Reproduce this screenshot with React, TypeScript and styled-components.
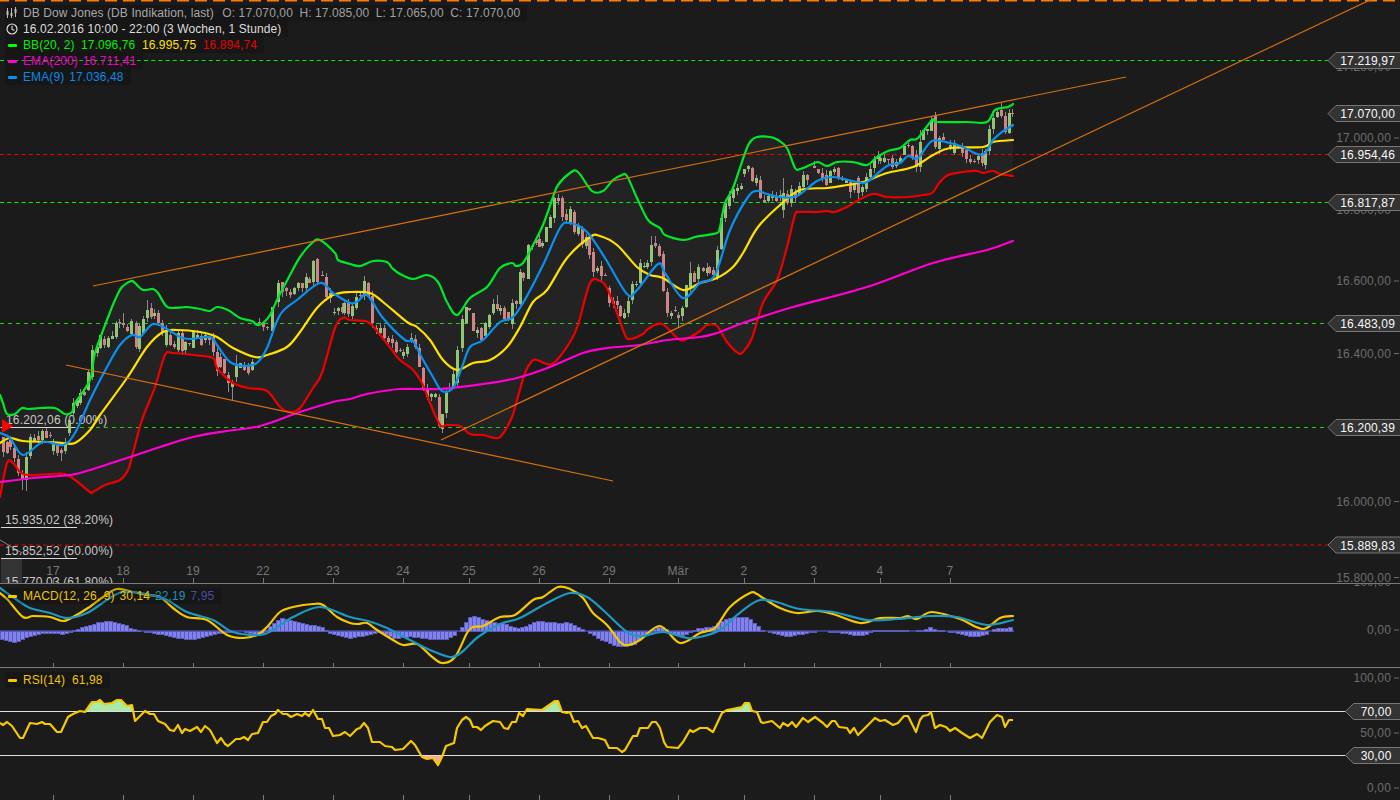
import React from "react";
import styled, { createGlobalStyle } from "styled-components";

type Pt = [number, number];
const P = (s: string): Pt[] => s.trim().split(/\s+/).map((t) => { const [a, b] = t.split(","); return [+a, +b] as Pt; });

const bbUp = P(`0,395 3,403 7,414 15,414 22,408 28,409 40,408 55,408 65,414 72,412 75,403 90,380 95,353 107,320 115,300 122,287 131,281 135,283 143,290 153,289 158,293 166,306 173,308 187,307 200,309 210,311 217,307 228,310 240,318 252,321 257,325 263,323 270,315 278,298 290,275 300,257 312,243 320,240 335,253 338,260 350,264 360,266 373,261 387,262 392,268 400,274 413,279 427,275 438,282 447,302 457,315 470,298 487,287 500,268 512,263 516,266 523,263 532,247 543,225 553,197 558,185 570,173 578,172 592,191 603,191 613,180 622,175 627,176 637,198 648,220 660,228 665,235 683,240 695,237 700,236 717,233 720,227 725,203 733,188 745,153 750,142 757,137 770,137 778,140 787,148 795,168 800,169 810,165 818,162 827,166 837,162 853,162 867,165 877,157 888,151 900,148 910,140 918,138 932,120 937,122 967,122 987,122 995,110 1008,107 1013,104`);
const bbLo = P(`0,497 7,463 13,463 20,472 28,475 50,474 65,474 75,480 90,492 93,492 105,485 120,480 128,470 133,453 142,420 155,387 165,355 173,353 193,355 213,358 217,368 233,383 248,388 267,391 280,407 290,412 300,408 313,388 322,373 335,328 343,318 350,320 368,322 380,335 392,350 400,360 413,370 422,383 430,403 440,425 447,425 460,426 470,434 483,435 495,438 502,435 512,417 517,400 525,373 532,361 537,360 547,364 555,362 570,342 578,325 590,283 600,281 607,288 617,313 625,335 630,339 643,334 648,329 662,324 680,340 690,337 700,331 707,325 717,326 727,342 738,353 743,352 752,338 763,303 777,280 787,247 795,215 800,212 817,212 827,211 835,212 847,207 857,201 873,194 887,197 908,197 923,195 932,193 940,182 948,175 963,172 977,171 983,173 993,171 1000,174 1013,176`);
const bbMid = P(`0,443 10,438 23,441 50,442 63,443 75,443 90,430 100,415 127,378 147,347 163,332 177,330 200,332 217,337 233,348 255,357 267,355 287,347 300,332 317,308 333,295 350,292 370,293 383,302 407,322 417,327 430,340 443,360 457,370 473,363 490,360 507,347 520,327 533,302 547,290 567,258 590,237 600,236 617,245 637,267 650,275 663,278 683,290 700,283 717,278 733,267 743,253 758,227 780,205 800,190 827,188 847,185 863,182 887,173 913,167 933,155 950,148 983,147 993,142 1013,140`);
const ema9 = P(`0,433 10,438 23,455 43,442 63,445 75,433 90,400 107,367 120,345 132,335 140,337 153,324 167,329 180,337 190,339 210,337 217,345 230,362 247,366 258,362 267,348 280,315 297,300 320,283 333,293 350,303 358,301 367,295 383,318 405,340 413,341 422,358 433,377 442,391 453,388 462,367 470,347 483,340 500,322 512,318 523,303 543,265 560,228 570,223 587,232 605,258 627,294 637,290 658,264 665,273 683,298 700,283 715,275 730,230 748,197 757,191 767,194 780,197 797,196 817,181 833,177 857,182 867,182 887,166 900,163 908,156 918,158 932,141 950,143 963,147 977,154 985,153 993,140 1002,132 1013,125`);
const ema200 = P(`0,482 33,478 70,475 90,470 130,457 160,447 193,437 227,431 260,426 300,412 333,402 350,399 367,394 400,389 440,389 483,384 517,378 550,367 583,353 607,348 640,345 667,340 700,337 717,333 743,323 793,307 867,287 933,263 987,250 1013,241`);

const macdA = P(`0,593 8,600 23,617 33,616 50,617 63,621 73,617 88,608 103,597 117,589 133,592 147,595 160,597 173,608 187,617 207,620 227,635 243,638 257,635 267,627 280,612 293,607 313,604 323,605 337,617 350,623 358,624 367,623 377,630 393,640 403,645 417,644 430,655 442,663 455,657 467,633 473,627 483,626 500,617 515,615 533,600 543,597 558,587 570,589 583,598 593,613 607,625 620,642 628,645 640,640 660,626 680,643 700,633 715,628 730,607 750,593 757,594 763,598 780,608 797,613 817,611 833,614 860,623 880,618 900,618 908,616 917,619 932,612 960,619 983,629 1000,618 1013,616`);
const macdB = P(`0,588 17,600 30,608 50,613 67,618 87,613 107,600 123,592 147,594 167,600 187,612 213,620 233,632 260,635 273,630 293,617 320,607 350,617 368,621 387,628 410,640 430,650 450,657 462,652 478,637 500,624 520,618 547,603 570,593 587,597 603,610 627,632 642,636 663,632 687,638 700,637 720,630 737,615 757,601 773,601 800,609 833,612 867,620 897,619 930,616 957,617 987,625 1013,620`);
const histAnchors = P(`0,7 8,10 16,11 24,7 32,4 44,2 56,2 64,3 72,0 80,-3 90,-6 98,-9 106,-10 116,-9 124,-7 130,-3 140,0 150,1 160,3 170,5 180,7 192,8 204,6 215,3 225,1 240,0 250,2 258,4 264,1 272,-7 282,-13 292,-11 302,-8 312,-6 322,-4 328,1 338,4 350,7 365,4 380,1 395,7 410,5 430,8 445,8 455,3 458,0 462,-4 470,-14 477,-15 485,-11 495,-9 505,-7 515,-4 520,-3 530,-7 535,-10 550,-9 560,-8 565,-9 570,-8 578,-4 585,-1 590,2 600,8 610,12 618,15 625,15 635,13 640,7 648,3 655,-3 660,-5 665,-3 670,2 680,5 690,1 697,-3 712,-4 718,-8 725,-12 735,-14 748,-14 752,-10 757,-6 762,-1 770,1 780,4 790,5 800,3 810,1 825,0 845,2 855,4 862,4 870,1 875,-1 885,-1 905,-1 915,0 925,-2 930,-4 935,-2 945,0 955,1 965,4 975,5 985,4 990,0 995,-3 1005,-3 1013,-4`);

const rsi = P(`0,723 3,725 7,722 12,726 20,738 23,738 30,723 37,724 42,722 45,724 50,724 57,732 61,732 68,717 73,714 80,711 85,712 92,702 97,702 100,700 104,704 112,703 117,700 121,700 127,706 132,705 135,721 145,711 150,714 154,714 158,721 165,724 170,730 174,731 178,725 182,733 185,729 190,731 197,727 201,732 205,726 210,730 217,743 221,738 225,744 228,746 236,739 240,739 244,737 248,740 252,734 258,733 263,722 267,722 271,716 275,714 278,710 283,714 287,714 291,717 297,714 302,716 305,713 309,716 313,710 318,719 322,719 325,728 329,728 333,736 340,735 345,732 350,736 357,729 360,728 364,723 368,728 372,742 380,742 385,746 392,747 395,750 403,749 411,741 415,745 422,757 427,759 433,758 438,765 442,757 446,746 454,743 457,728 462,720 466,717 470,720 473,727 477,727 481,730 485,726 493,721 500,722 504,728 508,729 512,722 516,722 519,713 523,716 527,709 542,710 555,701 558,701 562,712 567,713 570,712 574,722 578,721 582,728 586,726 593,738 598,738 605,740 609,748 617,748 622,752 625,750 633,736 637,736 640,728 648,728 652,722 656,722 660,728 664,742 667,747 678,748 683,742 690,730 693,732 700,728 707,728 713,732 722,713 727,710 742,707 745,703 749,703 752,711 757,712 761,722 763,723 772,721 780,728 783,723 788,726 792,722 796,727 803,718 808,722 815,717 823,723 827,727 832,721 835,721 839,727 847,728 850,733 854,728 858,735 863,730 875,718 880,721 885,720 893,725 898,723 904,716 908,716 916,732 920,720 923,716 928,715 931,712 935,728 940,725 946,727 950,731 955,728 962,733 970,738 977,734 982,738 990,722 997,715 1002,717 1005,727 1009,720 1013,720`);

// x:top:bottom:u|d  (optional :high:low for long wicks)
const candleSrc = `3:437:452:d 7:442:453:d 10:440:447:d 14:448:458:d 18:459:473:d 22:473:479:d:470:490 26:457:480:u:452:491 30:437:456:u 34:438:441:u 38:436:440:d:431:443 42:431:440:u 46:431:438:d 50:435:436:d 53:444:451:u 57:445:453:d 61:450:453:d:448:461 65:443:451:u 69:420:433:u 73:403:413:u 77:400:406:u 80:393:403:u 84:392:395:d 88:372:390:u 92:350:377:u 97:347:353:u 100:335:348:u 104:339:345:d 108:338:347:u 112:336:339:u 116:323:337:u 119:322:323:d 123:323:325:d:313:328 127:327:331:d 131:321:334:u 136:323:347:d 139:326:349:u 143:319:333:u 147:310:318:u:300:322 151:308:317:d 154:313:316:u 158:313:323:d 162:323:333:d 166:330:345:u 170:335:345:d 174:344:347:d 178:333:350:u 182:333:351:d 185:342:350:u 189:343:344:d 193:331:348:u 197:335:338:u 201:336:345:d 205:335:340:u 209:337:340:d 213:337:352:d 217:352:371:d 220:357:367:d 224:359:373:d 228:375:383:d:372:392 232:383:387:u:380:400 236:366:377:u:355:382 240:363:368:u 244:365:370:d 248:367:373:d 252:362:370:u 259:322:323:d 263:323:327:d 267:327:328:d 272:307:331:u 278:283:302:u 282:282:292:d 286:288:291:d 290:292:295:d 294:288:294:u 298:283:288:u 302:283:288:d 306:277:288:u 309:279:283:d 313:261:282:u 317:259:282:d 322:275:276:d 326:277:297:d 330:293:298:u 334:312:313:u 338:308:311:u 342:307:312:d 344:303:313:u 348:303:314:d 352:306:316:u 356:297:308:u 360:295:296:d 364:281:296:u:276:300 368:283:296:d 372:296:323:d 376:328:330:d 380:328:333:u 384:328:338:d 388:338:342:d 392:339:343:d 396:342:352:d 400:350:351:d 403:352:356:u 407:347:354:u 411:338:340:u:333:343 415:339:347:d 419:348:367:d 423:368:388:d 427:389:397:d:384:400 431:394:397:u 435:394:397:u 439:397:426:d 442:414:429:u 446:392:413:u 449:388:389:d 453:374:387:u 457:350:383:u 462:319:348:u 466:307:323:u 469:308:310:d 473:313:331:d 477:330:333:u 481:328:340:d 485:323:336:u 489:315:327:u 493:304:313:u 497:304:309:d:295:311 500:308:311:u 504:308:319:d 508:312:320:d 512:303:324:u 516:301:304:d 520:272:304:u 523:273:278:d 528:245:279:u 532:246:247:d 536:240:243:d 539:239:247:d 542:243:246:u 546:227:242:u 550:217:228:u 554:198:218:u 558:198:201:d 562:198:217:d 566:214:220:d 570:209:222:u 574:212:232:d 578:225:234:u 582:229:244:d 586:237:246:u 589:238:255:d 593:252:272:d 597:268:271:u 601:266:276:d 605:275:276:d 609:288:303:d 613:301:304:d 617:301:305:d 620:306:316:d 624:313:318:u 628:301:313:u 632:284:300:u 636:284:285:u 640:263:283:u 644:266:267:u 647:263:267:u 651:245:262:u:236:266 655:243:246:d:236:248 659:246:256:d 663:254:291:d 667:292:313:d 671:313:316:u 675:310:311:d 678:315:318:d:312:328 682:308:316:u 686:285:307:u 690:273:287:u:262:292 694:273:282:d 698:267:279:u 703:268:271:d 707:268:273:u 709:267:273:d 713:270:275:d 717:250:277:u 721:218:249:u 725:203:218:u 729:196:206:u 733:189:198:u 737:188:191:u 741:186:189:u 744:169:174:u 748:166:169:u 752:168:181:d 756:178:183:u 760:180:198:d 764:200:202:d 768:196:201:u 772:195:198:u 776:196:201:d 780:195:198:u 783:193:210:u:178:218 787:194:203:d 791:189:203:u 795:193:198:d 799:186:195:u 803:175:187:u 807:175:180:d 814:166:168:d 818:169:173:d 822:173:178:d 826:175:185:d 830:171:183:u 834:169:172:u 838:168:178:d 842:178:180:d 846:180:183:u 850:182:192:d:180:198 854:183:190:u 858:178:193:d:176:200 862:187:192:u 866:177:189:u 870:169:177:u 874:159:168:u 878:155:159:u 880:158:161:u 884:158:162:u 888:159:160:d 892:158:167:d 896:162:166:u 900:158:162:u 904:146:155:u 908:145:146:d 912:146:157:d 916:155:167:d:150:172 920:142:167:u:130:172 923:130:140:u 927:129:131:u 931:120:131:u 935:116:147:d 939:138:149:u 943:137:140:d 950:145:149:u 954:143:153:u 958:145:148:d 962:147:153:d 966:150:159:d 970:159:162:d 974:161:162:d 978:156:160:u 982:153:163:d 985:151:165:u 989:129:151:u 993:118:129:u 997:112:117:u 1001:110:116:d:103:118 1005:116:132:d 1009:113:133:u 1012:113:114:d`;

let seed = 7;
const rnd = () => { seed = (seed * 16807) % 2147483647; return seed / 2147483647; };
const candles = candleSrc.split(" ").map((t) => {
  const f = t.split(":");
  const top = +f[1], bottom = +f[2];
  const high = f[4] ? +f[4] : top - Math.round(rnd() * 5);
  const low = f[5] ? +f[5] : bottom + Math.round(rnd() * 5);
  return { x: +f[0], top, bottom, up: f[3] === "u", high, low };
});

const smooth = (pts: Pt[]) => {
  let d = `M${pts[0][0]},${pts[0][1]}`;
  for (let i = 0; i < pts.length - 1; i++) {
    const p0 = pts[Math.max(i - 1, 0)], p1 = pts[i], p2 = pts[i + 1], p3 = pts[Math.min(i + 2, pts.length - 1)];
    const c1 = [p1[0] + (p2[0] - p0[0]) / 6, p1[1] + (p2[1] - p0[1]) / 6];
    const c2 = [p2[0] - (p3[0] - p1[0]) / 6, p2[1] - (p3[1] - p1[1]) / 6];
    d += `C${c1[0].toFixed(1)},${c1[1].toFixed(1)} ${c2[0].toFixed(1)},${c2[1].toFixed(1)} ${p2[0]},${p2[1]}`;
  }
  return d;
};
const poly = (pts: Pt[]) => pts.map((p) => p.join(",")).join(" ");
const lerp = (pts: Pt[], x: number) => {
  for (let i = 0; i < pts.length - 1; i++) {
    if (x >= pts[i][0] && x <= pts[i + 1][0]) {
      const t = (x - pts[i][0]) / (pts[i + 1][0] - pts[i][0]);
      return pts[i][1] + t * (pts[i + 1][1] - pts[i][1]);
    }
  }
  return 0;
};
const hist = Array.from({ length: 253 }, (_, i) => ({ x: i * 4 + 1, v: Math.round(lerp(histAnchors, i * 4 + 2)) }));

const ticks = [53, 123, 193, 263, 333, 403, 469, 539, 609, 678, 744, 814, 880, 950];
const tickLabels = ["17", "18", "19", "22", "23", "24", "25", "26", "29", "Mär", "2", "3", "4", "7"];

const Global = createGlobalStyle`
  html, body { margin: 0; padding: 0; background: #1b1b1b; }
  #root { width: 1400px; height: 800px; overflow: hidden; }
`;
const Page = styled.div`
  width: 1400px; height: 800px; display: flex; flex-direction: column;
  background: #1b1b1b; font-family: "Liberation Sans", Arial, sans-serif; font-size: 12px;
`;
const Pane = styled.section<{ $h: number }>`
  position: relative; height: ${(p) => p.$h}px; flex: none; overflow: hidden;
`;
const Plot = styled.svg`
  position: absolute; inset: 0; width: 1400px; height: 100%; display: block;
  text { font-family: "Liberation Sans", Arial, sans-serif; font-size: 12px; letter-spacing: 0.15px; }
`;
const Legend = styled.div<{ $top: number }>`
  position: absolute; left: 5px; top: ${(p) => p.$top}px; display: flex; flex-direction: column; align-items: flex-start;
`;
const Row = styled.div<{ $gap?: number }>`
  height: 16px; display: flex; align-items: center; gap: ${(p) => p.$gap ?? 7}px; padding: 0 7px 0 1px; white-space: nowrap;
  background: rgba(0, 0, 0, 0.17); letter-spacing: 0.1px; line-height: 16px;
`;
const IconSlot = styled.span<{ $gap?: number }>`
  width: 12px; height: 12px; flex: none; margin-right: ${(p) => 5 - (p.$gap ?? 7)}px; display: flex; align-items: center; justify-content: center;
  svg { display: block; }
`;
const Swatch = styled.i<{ $c: string }>`
  width: 9px; height: 3px; border-radius: 1px; background: ${(p) => p.$c}; flex: none; display: block;
`;
const Val = styled.span<{ $c: string }>` color: ${(p) => p.$c}; `;
const Title = styled(Val)` margin-right: 2px; `;

const Line = styled.path<{ $c: string; $w?: number }>`
  fill: none; stroke: ${(p) => p.$c}; stroke-width: ${(p) => p.$w ?? 2.2}px; stroke-linejoin: round; stroke-linecap: round;
`;
const Seg = styled.line<{ $c: string; $w?: number; $dash?: string }>`
  stroke: ${(p) => p.$c}; stroke-width: ${(p) => p.$w ?? 1}px; ${(p) => (p.$dash ? `stroke-dasharray: ${p.$dash};` : "")}
`;
const AxisText = styled.text<{ $c?: string }>` fill: ${(p) => p.$c ?? "#6c6c6c"}; `;
const EndText = styled(AxisText)` text-anchor: end; `;
const MidText = styled(AxisText)` text-anchor: middle; `;
const Wick = styled.line` stroke: #8a8a8a; stroke-width: 1px; `;
const Body = styled.rect<{ $up: boolean }>` fill: ${(p) => (p.$up ? "#93c577" : "#cf8585")}; `;
const TagShape = styled.polygon` fill: #333; stroke: #777; stroke-width: 1px; `;
const Bar = styled.rect` fill: #8282ee; stroke: #5a5ab8; stroke-width: 1px; `;
const Band = styled.polygon` fill: rgba(255, 255, 255, 0.035); `;
const Shade = styled.polygon<{ $c: string }>` fill: ${(p) => p.$c}; `;
const Cover = styled.rect` fill: #333; `;
const Marker = styled.polygon` fill: #f00; `;
const RsiPoly = styled.polyline` fill: none; stroke: #f5c800; stroke-width: 2.2px; stroke-linejoin: round; `;
const Divider = styled.div`
  position: absolute; left: 0; right: 0; bottom: 0; height: 1px; background: #7a7a7a;
`;

const Tag = ({ y, label, x = 1328, end = 1395 }: { y: number; label: string; x?: number; end?: number }) => (
  <g>
    <TagShape points={`1401,${y - 8} ${x + 8},${y - 8} ${x},${y} ${x + 8},${y + 8} 1401,${y + 8}`} />
    <EndText $c="#f8f8f8" x={end} y={y + 4.5}>{label}</EndText>
  </g>
);
const Axis = ({ y, label }: { y: number; label: string }) => (
  <g>
    <EndText x={1391} y={y + 4.5}>{label}</EndText>
    <Seg $c="#6c6c6c" x1={1394} x2={1399} y1={y + 0.5} y2={y + 0.5} />
  </g>
);
const Ticks = ({ y1, y2 }: { y1: number; y2: number }) => (
  <>{ticks.map((t) => <Seg key={t} $c="#777" x1={t + 0.5} x2={t + 0.5} y1={y1} y2={y2} />)}</>
);
const Fib = ({ y, label, x = 5, x2 = 77 }: { y: number; label: string; x?: number; x2?: number }) => (
  <g>
    <AxisText $c="#c8c8c8" x={x} y={y}>{label}</AxisText>
    <Seg $c="#d8d8d8" x1={1} x2={x2} y1={y + 3.5} y2={y + 3.5} />
  </g>
);

const CandleIcon = () => (
  <svg width="12" height="12" viewBox="0 0 12 12">
    <path d="M1.5 1v10M5.5 1v10M9.5 0v10" stroke="#bbb" strokeWidth="1" fill="none" />
    <path d="M0.5 4h2v4h-2zM4.5 6h2v3h-2zM8.5 2h2v4h-2z" fill="#bbb" />
  </svg>
);
const ClockIcon = () => (
  <svg width="12" height="12" viewBox="0 0 12 12">
    <circle cx="6" cy="6" r="5" stroke="#ddd" strokeWidth="1.2" fill="none" />
    <path d="M6 2.8V6.2L8.4 7.4" stroke="#ddd" strokeWidth="1.1" fill="none" />
  </svg>
);

export default function App() {
  const band = poly([...bbUp, ...[...bbLo].reverse()]);
  return (
    <Page>
      <Global />
      <Pane $h={584}>
        <Plot viewBox="0 0 1400 584">
          <Seg $c="#ff7a00" $w={2} $dash="12 6" x1={-3} x2={1400} y1={0.5} y2={0.5} />
          <Band points={band} />
          <Axis y={66} label="17.200,00" />
          <Axis y={137.5} label="17.000,00" />
          <Axis y={209} label="16.800,00" />
          <Axis y={280.5} label="16.600,00" />
          <Axis y={353} label="16.400,00" />
          <Axis y={501} label="16.000,00" />
          <Axis y={577} label="15.800,00" />
          <Seg $c="#00ee00" $dash="4 3.2" x1={0} x2={1328} y1={60.5} y2={60.5} />
          <Seg $c="#f00000" $dash="4 3.2" x1={0} x2={1328} y1={154.5} y2={154.5} />
          <Seg $c="#00ee00" $dash="4 3.2" x1={0} x2={1328} y1={202.5} y2={202.5} />
          <Seg $c="#18d018" $dash="4 4" x1={0} x2={1326} y1={323.5} y2={323.5} />
          <Seg $c="#18d018" $dash="4 4" x1={0} x2={1326} y1={427.5} y2={427.5} />
          <Seg $c="#f00000" $dash="4 3.2" x1={0} x2={1328} y1={545} y2={545} />

          <Cover x={1} y={558} width={21} height={25} />
          <Seg $c="#888" x1={0} x2={22} y1={540} y2={553} />
          <Fib y={424} x={6} x2={75} label="16.202,06 (0.00%)" />
          <Fib y={524} label="15.935,02 (38.20%)" />
          <Fib y={555} label="15.852,52 (50.00%)" />
          <AxisText $c="#c8c8c8" x={5} y={586}>15.770,03 (61,80%)</AxisText>

          {candles.map((c) => (
            <g key={c.x}>
              <Wick x1={c.x + 0.5} x2={c.x + 0.5} y1={c.high} y2={c.low} />
              <Body $up={c.up} x={c.x - 1} y={c.top} width={3} height={c.bottom - c.top} />
            </g>
          ))}

          <Line $c="#00e82a" d={smooth(bbUp)} />
          <Line $c="#ee0000" d={smooth(bbLo)} />
          <Line $c="#ff00d0" d={smooth(ema200)} />
          <Line $c="#ffe000" d={smooth(bbMid)} />
          <Line $c="#0a90f0" d={smooth(ema9)} />

          <Seg $c="#d9700c" $w={1.2} x1={93} y1={286} x2={1126} y2={77} />
          <Seg $c="#d9700c" $w={1.2} x1={66} y1={365} x2={613} y2={481} />
          <Seg $c="#d9700c" $w={1.2} x1={441} y1={440} x2={1370} y2={0} />
          <Marker points="2,419 2,433 13,426" />

          {ticks.map((t, i) => <MidText key={t} $c="#777" x={t} y={575}>{tickLabels[i]}</MidText>)}
          <Ticks y1={578} y2={583} />

          <Tag y={60.5} label="17.219,97" />
          <Tag y={113.5} label="17.070,00" />
          <Tag y={154.5} label="16.954,46" />
          <Tag y={202.5} label="16.817,87" />
          <Tag y={323.5} label="16.483,09" />
          <Tag y={427.5} label="16.200,39" />
          <Tag y={545} label="15.889,83" />
        </Plot>
        <Legend $top={5}>
          <Row $gap={6.5}>
            <IconSlot $gap={6.5}><CandleIcon /></IconSlot>
            <Title $c="#a8a8a8">DB Dow Jones (DB Indikation, last)</Title>
            <Val $c="#a0a0a0">O: 17.070,00</Val>
            <Val $c="#a0a0a0">H: 17.085,00</Val>
            <Val $c="#a0a0a0">L: 17.065,00</Val>
            <Val $c="#a0a0a0">C: 17.070,00</Val>
          </Row>
          <Row>
            <IconSlot><ClockIcon /></IconSlot>
            <Val $c="#dcdcdc">16.02.2016 10:00 - 22:00 (3 Wochen, 1 Stunde)</Val>
          </Row>
          <Row $gap={6.5}>
            <IconSlot $gap={6.5}><Swatch $c="#00ff00" /></IconSlot>
            <Val $c="#00f000">BB(20, 2)</Val>
            <Val $c="#00f000">17.096,76</Val>
            <Val $c="#ffe000">16.995,75</Val>
            <Val $c="#e80000">16.894,74</Val>
          </Row>
          <Row $gap={5}>
            <IconSlot $gap={5}><Swatch $c="#ff00d0" /></IconSlot>
            <Val $c="#f000c8">EMA(200)</Val>
            <Val $c="#f000c8">16.711,41</Val>
          </Row>
          <Row $gap={5}>
            <IconSlot $gap={5}><Swatch $c="#0a90f0" /></IconSlot>
            <Val $c="#0a88e8">EMA(9)</Val>
            <Val $c="#0a88e8">17.036,48</Val>
          </Row>
        </Legend>
        <Divider />
      </Pane>

      <Pane $h={84}>
        <Plot viewBox="0 584 1400 84">
          <Seg $c="#4a4aa8" $w={1.5} x1={0} x2={1014} y1={631} y2={631} />
          {hist.map((b) => (
            <Bar key={b.x} x={b.x - 0.5} y={Math.min(631, 631 + b.v) + 0.5} width={4} height={Math.abs(b.v)} />
          ))}
          <Line $c="#f5c800" d={smooth(macdA)} />
          <Line $c="#1e98c0" d={smooth(macdB)} />
          <Axis y={581} label="100,00" />
          <Axis y={629.5} label="0,00" />
          <Ticks y1={663} y2={667} />
        </Plot>
        <Legend $top={4}>
          <Row $gap={5}>
            <IconSlot $gap={5}><Swatch $c="#f5c800" /></IconSlot>
            <Val $c="#f0c400">MACD(12, 26, 9)</Val>
            <Val $c="#f0c400">30,14</Val>
            <Val $c="#1e90b8">22,19</Val>
            <Val $c="#4c4ca8">7,95</Val>
          </Row>
        </Legend>
        <Divider />
      </Pane>

      <Pane $h={132}>
        <Plot viewBox="0 668 1400 132">
          <defs>
            <clipPath id="ob"><rect x="0" y="667" width="1400" height="44.5" /></clipPath>
            <clipPath id="os"><rect x="0" y="755.5" width="1400" height="44" /></clipPath>
          </defs>
          <Shade $c="#a8eaa8" clipPath="url(#ob)" points={poly([[0, 711.5], ...rsi, [1013, 711.5]])} />
          <Shade $c="#f2a8a8" clipPath="url(#os)" points={poly([[0, 755.5], ...rsi, [1013, 755.5]])} />
          <Seg $c="#dedede" x1={0} x2={1346} y1={711.5} y2={711.5} />
          <Seg $c="#dedede" x1={0} x2={1346} y1={755.5} y2={755.5} />
          <RsiPoly points={poly(rsi)} />
          <Axis y={677.5} label="100,00" />
          <Axis y={732.5} label="50,00" />
          <Axis y={787.5} label="0,00" />
          <Ticks y1={795} y2={800} />
          <Tag y={711.5} label="70,00" x={1345.5} end={1391.5} />
          <Tag y={755.5} label="30,00" x={1345.5} end={1391.5} />
        </Plot>
        <Legend $top={4}>
          <Row>
            <IconSlot><Swatch $c="#f5c800" /></IconSlot>
            <Val $c="#f0c400">RSI(14)</Val>
            <Val $c="#f0c400">61,98</Val>
          </Row>
        </Legend>
      </Pane>
    </Page>
  );
}
